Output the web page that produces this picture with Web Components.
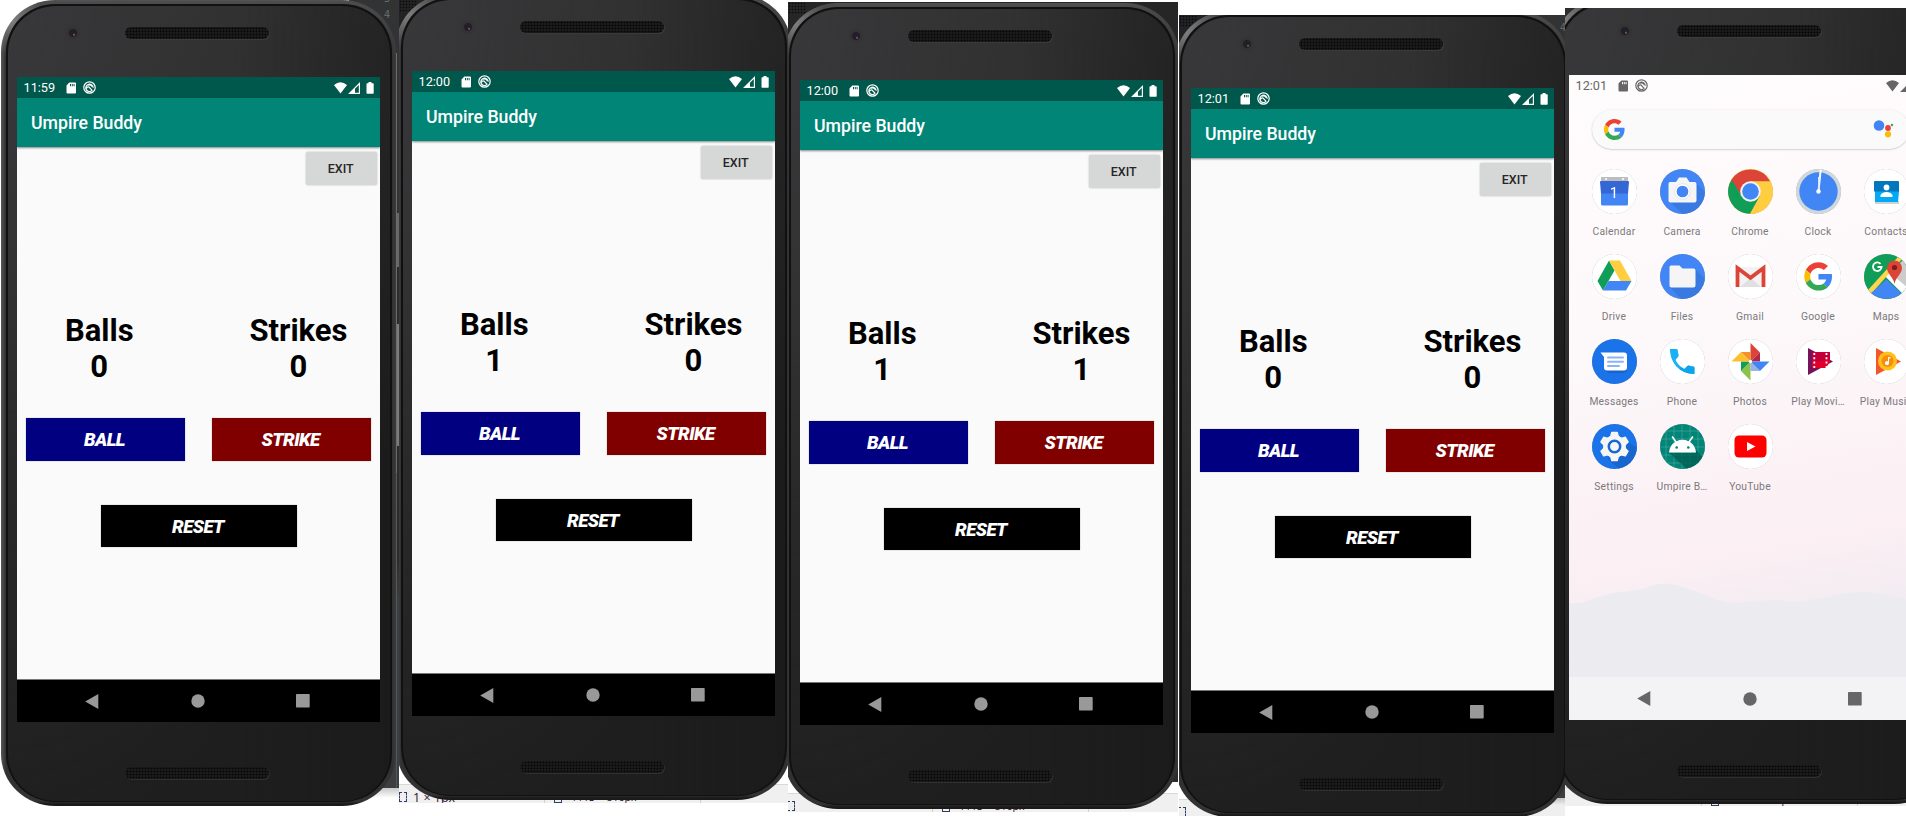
<!DOCTYPE html>
<html lang="en">
<head>
<meta charset="utf-8">
<title>Umpire Buddy</title>
<style>
  body { margin: 0; background: #fff; font-family: Roboto, "Liberation Sans", sans-serif; overflow: hidden; width: 1906px; height: 816px; }
  main { display: grid; grid-template-columns: 399px 389px 391px 386px 341px; height: 816px; overflow: hidden; }
</style>
</head>
<body>
<main>
  <capture-pane backdrop="editor" style="--x:1px;--y:0px;--w:399px;--h:816px;--ty:0px">
    <phone-frame><umpire-app time="11:59" balls="0" strikes="0"></umpire-app></phone-frame>
  </capture-pane>
  <capture-pane backdrop="mesh" style="--x:-3px;--y:-6px;--w:389px;--h:803px;--sx:0px" selection="1 × 1px" label="1113 × 816px">
    <phone-frame><umpire-app time="12:00" balls="1" strikes="0"></umpire-app></phone-frame>
  </capture-pane>
  <capture-pane backdrop="dark" style="--x:-4px;--y:1px;--w:390px;--h:810px;--ty:2px;--sx:-1px" label="1113 × 816px">
    <phone-frame><umpire-app time="12:00" balls="1" strikes="1"></umpire-app></phone-frame>
  </capture-pane>
  <capture-pane backdrop="editor-low" style="--x:-4px;--y:-4px;--w:386px;--h:801px;--ty:15px;--sx:-1px">
    <phone-frame><umpire-app time="12:01" balls="0" strikes="0"></umpire-app></phone-frame>
  </capture-pane>
  <capture-pane backdrop="launcher" style="--x:-12px;--y:-10px;--w:341px;--h:798px;--ty:8px;--sx:-9px" label="1500 × 816px">
    <phone-frame><app-launcher time="12:01"></app-launcher></phone-frame>
  </capture-pane>
</main>

<script>
const define = (name, render) => customElements.define(name, class extends HTMLElement {
  connectedCallback() {
    if (this.shadowRoot) return;
    this.attachShadow({ mode: 'open' }).innerHTML = render(this);
  }
});

/* Strip along the bottom of the image editor: selection size and canvas size. */
define('size-strip', el => `
<style>
  :host { display: flex; height: 18px; background: #f0f0f0; border-top: 1px solid #d8d8d8; margin-left: var(--sx, 0px); font: 12px/25px "Open Sans", Roboto, sans-serif; color: #301030; width: 500px; overflow: hidden; }
  div { box-sizing: border-box; display: flex; white-space: nowrap; border-right: 1px solid #d0d0d0; }
  .a { width: 146px; gap: 6px; font-size: 12.500px; } .b { width: 156px; padding-left: 9px; gap: 9px; font-size: 10.500px; }
  i { width: 6px; height: 8px; border: 1px dashed #2b3f66; margin-top: 7px; flex: none; }
  .b i { border-style: solid; height: 9px; }
</style>
<div class="a"><i></i>${el.getAttribute('selection') ? `<span>${el.getAttribute('selection')}</span>` : ''}</div>
${el.getAttribute('label') ? `<div class="b"><i></i><span>${el.getAttribute('label')}</span></div>` : ''}`);

/* One clipped capture with whatever window shows behind the phone. */
define('capture-pane', el => {
  const kind = el.getAttribute('backdrop');
  const strip = kind !== 'editor';
  return `
<style>
  :host { display: block; width: var(--w); height: var(--h); margin-top: var(--ty, 0px); overflow: hidden; position: relative; background: #fff; }
  .back { position: absolute; inset: 0; display: flex; flex-direction: column; justify-content: flex-end; }
  .editor { background: linear-gradient(180deg, #313335 0 215px, #2b2b2b 230px 560px, #3c3f41 600px 788px, #c8c8c8 788px, #fff 798px) right / 50px 100% no-repeat; }
  .editor-low { background: linear-gradient(180deg, #313335 0 300px, #3c3f41 400px 783px, #c4c4c4 783px, #efefef 790px) right / 60px 100% no-repeat, linear-gradient(#202223, #202223) 0 0 / 100% 30px no-repeat; }
  .editor-low size-strip { width: 70px; height: 16px; }
  .mesh { background: linear-gradient(#232323, #232323) 0 0 / 60px 60px no-repeat; }
  .dark { background: linear-gradient(#262626, #262626) 0 0 / 100% 200px no-repeat, linear-gradient(#2b2b2b, #2b2b2b) right 0 / 8px 780px no-repeat; }
  .launcher { background: linear-gradient(#2b2d2e, #2b2d2e) 0 0 / 60px 60px no-repeat; }
  .holes { position: absolute; top: 0; left: 0; width: 18px; height: 12px; background: radial-gradient(circle, #0a0a0a 0.7px, #0000 1.1px) 0 0 / 3px 3px; }
  .nums { position: absolute; right: 9px; top: -9px; font: 10px/16px "DejaVu Sans Mono", monospace; color: #686b6e; text-align: right; width: 10px; }
  .nums.low { right: -1px; top: 5px; }
  .side { position: absolute; right: 0; top: 53px; width: 3px; height: 735px; background: linear-gradient(#6c6c6c 0 420px, #55585a 420px) 0 0 / 1px 100% no-repeat, linear-gradient(#0000 160px, #66686a 160px 214px, #0000 214px 271px, #7b7b7b 271px 393px, #0000 393px) 1px 0 / 2px 100% no-repeat; }
  .clip { position: relative; margin-left: var(--x); transform: translateY(var(--y)); width: max-content; }
</style>
<div class="back ${kind}">${strip ? `<size-strip selection="${el.getAttribute('selection') || ''}" label="${el.getAttribute('label') || ''}"></size-strip>` : ''}</div>
${kind === 'mesh' || kind === 'dark' || kind === 'editor-low' ? '<div class="holes"></div>' : ''}
${kind === 'editor' ? '<div class="side"></div><div class="nums"><div>3</div><div>4</div></div>' : ''}
${kind === 'editor-low' ? '<div class="nums low">4</div>' : ''}
<div class="clip"><slot></slot></div>`;
});

define('phone-frame', () => `
<style>
  :host { display: block; width: 395px; height: 806px; }
  .rim { box-sizing: border-box; width: 395px; height: 806px; padding: 4px 4.500px 4px 5px; border-radius: 54px / 52px; background: radial-gradient(circle at 10px 20px, #a0a0a0aa 0, #0000 34px), linear-gradient(90deg, #77777788 0, #0000 5px 391px, #4448 395px), linear-gradient(180deg, #555 0, #4c4c4c 2px, #303030 60px, #303030 750px, #333 801px, #1c191b 804px); }
  .line { box-sizing: border-box; height: 798px; padding: 1.5px; border-radius: 49px / 48px; background: #111; }
  .face { box-sizing: border-box; height: 795px; border-radius: 48px / 47px; overflow: hidden; padding: 0 9.5px; display: flex; flex-direction: column; align-items: center;
    background: linear-gradient(90deg, #0000 60%, #17171766 100%), radial-gradient(ellipse at 0 0, #38383a, #0000 75%), linear-gradient(#2c2c2c 0, #272727 250px, #1e1e1e 450px, #1e1e1e); }
  .top { height: 71.5px; width: 363px; flex: none; display: grid; grid-template-columns: 108px 144px 1fr; align-items: start; }
  .cam { width: 14px; height: 14px; border-radius: 50%; margin: 20px 0 0 49px; background: radial-gradient(circle at 58% 62%, #7a4a58 0 .8px, #0000 1.4px), radial-gradient(circle, #211e28 0 3.6px, #343334 4.6px 7px); }
  .grille { width: 144px; height: 12px; margin-top: 21.3px; border-radius: 6px; background: radial-gradient(circle, #060606 .7px, #0000 1.2px) 1px 0 / 3px 3px, #1b1b1b; box-shadow: 1px 1px 0 #3a3a3a; }
  .scr { width: 363px; height: 645px; overflow: hidden; flex: none; align-self: flex-start; }
  .low { margin: 44.5px 3px 0 0; box-shadow: 1px 1px 0 #303030; }
</style>
<div class="rim"><div class="line"><div class="face">
  <div class="top"><div class="cam"></div><div class="grille"></div></div>
  <div class="scr"><slot></slot></div>
  <div class="grille low"></div>
</div></div></div>`);

define('status-bar', el => `
<style>
  :host { display: flex; align-items: center; height: 21px; box-sizing: border-box; padding: 0 6px 0 6.500px; font: 12.7px/21px Roboto, sans-serif; color: #fff; }
  .t { width: 41px; } svg { display: block; fill: currentColor; }
</style>
<span class="t">${el.getAttribute('time')}</span>
<svg width="12" height="12" viewBox="0 0 12 12"><path fill-rule="evenodd" d="M4.3.5H10q1 0 1 1v9q0 1-1 1H2.500q-1 0-1-1V3.400zM5 2v2.200h1V2zm1.800 0v2.200h1V2zm1.800 0v2.200h1V2z"/></svg>
<svg width="13" height="13" viewBox="0 0 13 13" style="margin-left:6.500px"><g fill="none" stroke="currentColor" stroke-width="1.200"><circle cx="6.500" cy="6.500" r="5.700"/><path d="M9 9.600A3.700 3.700 0 1 1 10.200 6.800M3.300 7.600Q4.200 5.600 6 6L9.400 9.700M5 4.200Q7.500 3 9.200 5.600"/></g></svg>
<svg width="13" height="12" viewBox="0 0 13 12" style="margin-left:auto"><path d="M0 3Q6.500-2.600 13 3L6.500 11.500z"/></svg>
<svg width="12" height="12" viewBox="0 0 12 12" style="margin-left:1px"><path fill-rule="evenodd" d="M12 0v12H0zM10.800 2.900 7 6.700v4.100h3.800z"/></svg>
<svg width="8" height="12" viewBox="0 0 8 12" style="margin-left:6px"><path d="M2.500 0h3v1.200H7q.7 0 .7.700v9q0 .8-.7.800H1.200q-.7 0-.7-.8v-9q0-.7.7-.7h1.300z"/></svg>`);

define('nav-bar', () => `
<style>
  :host { display: flex; height: 43px; align-items: center; box-sizing: border-box; padding: 0 70px 0 68px; justify-content: space-between; }
  svg { display: block; fill: currentColor; }
</style>
<svg width="15" height="15" viewBox="0 0 15 15"><path d="M.200 7.500 13.300 0v15z"/></svg>
<svg width="14" height="14" viewBox="0 0 14 14"><circle cx="7" cy="7" r="6.700"/></svg>
<svg width="14" height="14" viewBox="0 0 14 14"><rect width="13.700" height="13.500" rx=".7"/></svg>`);

define('score-column', el => `
<style>
  :host { display: block; text-align: center; font: bold 31px/36px Roboto, sans-serif; color: #000; }
</style>
<div><slot></slot></div><div>${el.getAttribute('count')}</div>`);

define('call-button', () => `
<style>
  :host { display: block; box-sizing: border-box; height: 42.500px; text-align: center; font: italic 900 18.500px/45px Roboto, sans-serif; letter-spacing: -.55px; color: #fff; text-indent: -2px; background: var(--c); box-shadow: 0 0 1px #0006; }
</style><slot></slot>`);

define('umpire-app', el => `
<style>
  :host { display: flex; flex-direction: column; height: 645px; background: #fafafa; }
  status-bar { background: #00574b; flex: none; }
  header { height: 49px; flex: none; background: #008577; color: #fff; font: 500 17.700px/50px Roboto, sans-serif; padding-left: 14px; box-shadow: 0 1px 2px #0007; }
  section { flex: 1; display: flex; flex-direction: column; }
  .exit { align-self: flex-end; margin: 5px 3px 0 0; width: 71.500px; height: 32.500px; background: #d6d7d7; border-radius: 2px; text-align: center; font: 500 12.500px/33px Roboto, sans-serif; color: #262626; text-indent: -1px; box-shadow: 0 0 2px #0004; }
  .score { display: grid; grid-template-columns: 164.500px 163px; gap: 35.500px; margin-top: 128.500px; justify-content: start; }
  .row { display: grid; grid-template-columns: 159px 159px; gap: 27px; margin: 33px 0 0 9px; }
  .reset { width: 196px; margin: 44px 0 0 84px; }
  nav-bar { background: #000; color: #999; border-top: 1px solid #777; flex: none; }
</style>
<status-bar time="${el.getAttribute('time')}"></status-bar>
<header>Umpire Buddy</header>
<section>
  <div class="exit">EXIT</div>
  <div class="score"><score-column count="${el.getAttribute('balls')}">Balls</score-column><score-column count="${el.getAttribute('strikes')}">Strikes</score-column></div>
  <div class="row"><call-button style="--c:#000080">BALL</call-button><call-button style="--c:#800000">STRIKE</call-button></div>
  <call-button class="reset" style="--c:#000">RESET</call-button>
</section>
<nav-bar></nav-bar>`);

const G = `<path fill="#ea4335" d="M24 9.500c3.500 0 6.700 1.200 9.200 3.600l6.900-6.900C35.900 2.400 30.500 0 24 0 14.600 0 6.500 5.400 2.600 13.200l8 6.200C12.400 13.700 17.700 9.500 24 9.500z"/><path fill="#4285f4" d="M47 24.600c0-1.600-.2-3.100-.4-4.600H24v9h12.900c-.6 3-2.300 5.500-4.800 7.200l7.700 6C44.400 38 47 31.800 47 24.600z"/><path fill="#fbbc05" d="M10.500 28.600a14.500 14.500 0 0 1 0-9.200l-8-6.200a24 24 0 0 0 0 21.600z"/><path fill="#34a853" d="M24 48c6.500 0 11.900-2.100 15.900-5.800l-7.700-6c-2.200 1.500-4.900 2.300-8.200 2.300-6.300 0-11.600-4.200-13.500-9.900l-8 6.200C6.500 42.600 14.600 48 24 48z"/>`;

/* Launcher artwork on a 45-unit disc. */
const ART = {
  Calendar: ['#fff', `<path d="M9 8h27v8H9z" fill="#bdbdbd"/><circle cx="14" cy="10" r="1" fill="#fff"/><circle cx="31" cy="10" r="1" fill="#fff"/><path fill="#4285f4" d="M9 24h27v11q0 1.500-1.500 1.500h-24Q9 36.500 9 35z"/><path fill="#3367d6" d="M8 13q0-1 1-1h27q1 0 1 1l-1 11.500H9z"/>`, '1'],
  Camera: ['#4285f4', `<path fill="#2f6fd0" opacity=".5" d="M36 14 45 23q0 20-22 22L10 33z"/><path fill="#f5f5f5" d="M10 13h6l3-4.500h7.500L29.500 13H34.500q2 0 2 2v16.500q0 2-2 2h-24q-2 0-2-2V15q0-2 1.500-2z"/><circle cx="22.500" cy="22.500" r="6.600" fill="#4285f4" stroke="#fff" stroke-width="1.500"/><circle cx="22.500" cy="22.500" r="7.800" fill="none" stroke="#e0e4ea" stroke-width=".8"/>`],
  Chrome: ['#ffcd40', `<path fill="#0f9d58" d="M22 45 32 27 20 32 12 26 3.500 10.500A22.500 22.500 0 0 0 22 45z"/><path fill="#ffcd40" d="M42 12.200A22.500 22.500 0 0 1 22 45L32 27V12.200z"/><path fill="#db4437" d="M3 11.500A22.500 22.500 0 0 1 42 12.200H22.500L13 26z"/><path fill="#0f9d58" d="M3.500 10.500 13 26l-4 2z"/><circle cx="22.500" cy="22.500" r="10.300" fill="#f1f1f1"/><circle cx="22.500" cy="22.500" r="8.300" fill="#4285f4"/>`],
  Clock: ['#cfd8dc', `<circle cx="22.500" cy="22.500" r="19.200" fill="#4285f4"/><path d="M22.500 22.500 24.700.5" stroke="#fff" stroke-width="2"/><path d="M23 22 22.700 8" stroke="#dce6f5" stroke-width="1.500"/><circle cx="22.500" cy="22.500" r="2.200" fill="#fff"/>`],
  Contacts: ['#fff', `<path fill="#cfd2d4" d="M11 32h24v3H11z"/><path fill="#03a9f4" d="M11 22h24l-1 11H11z"/><path fill="#0277bd" d="M10 13q0-1 1-1h23q1 0 1 1v9.500H10z"/><circle cx="22.500" cy="18.500" r="2.900" fill="#fff"/><path fill="#fff" d="M16.500 28v-2q2-3 6-3t6 3v2z"/>`],
  Drive: ['#fff', `<path fill="#0f9d58" d="M17 6.500 22.500 16.500 11 36.500 5.500 27z"/><path fill="#ffcd40" d="M17 6.500h11L39.500 27H28.500z"/><path fill="#4285f4" d="M16.500 27h23L34 36.500H11z"/>`],
  Files: ['#4285f4', `<path fill="#2f6fd0" opacity=".5" d="M36 16 45 25q0 20-24 20L10 33z"/><path fill="#f5f5f5" d="M11 11.500h8.500l3 3h11q2 0 2 2V31.500q0 2-2 2H11.500q-2 0-2-2V13q0-1.500 1.500-1.500z"/>`],
  Gmail: ['#fff', `<path fill="#f2f2f2" d="M9 13h27v20H9z"/><path fill="#e0e0e0" d="m12 33 10.500-9L33 33z"/><path fill="none" stroke="#db4437" stroke-width="3.800" d="M9.500 33V14l13 9.800L35.500 14v19"/>`],
  Google: ['#fff', `<g transform="translate(8.300 8.300) scale(.59)">${G}</g>`],
  Maps: ['#0f9d58', `<path fill="#ccc" d="M22 23 40 5q5 8 5 18t-7 16z"/><path fill="#fff" d="m21 22 4-4L44 34l-5 6z"/><path fill="#ffd54f" d="M38 5 7 40l-3-4L34 3z"/><path fill="#4285f4" d="M22.500 25.500 39 41q-16 8-33-1z"/><path fill="#db4437" d="M30.500 30c-1-7-7.500-10-7.500-16a7.500 7.500 0 0 1 15 0c0 6-6.500 9-7.500 16z"/><circle cx="30.500" cy="13.500" r="2.600" fill="#7b1f17"/><path fill="none" stroke="#fff" stroke-width="1.800" d="M16.500 9.800A4.300 4.300 0 1 0 17.600 13H13.500"/>`],
  Messages: ['#1a73e8', `<path fill="#1558b8" opacity=".6" d="M35 16v14q0 4-4 4H16l-3-3z"/><path fill="#fff" d="M8.500 13.500H32q3 0 3 3V28.500q0 3-3 3H15q-3 0-3-3V18z"/><path stroke="#8ab4f8" stroke-width="2" stroke-linecap="round" d="M16 18.500h15M16 22.800h15M16 27h11"/>`],
  Phone: ['#fff', `<path fill="#19b1f5" d="M10 10h6.500q1 0 1.200 1 .3 3 1 5 .2 1-.5 1.700L15.500 21q3 6 8.800 9l3-3q.8-.7 1.700-.4 2.500.8 4.500 1 1 .2 1 1.200V35C19 35 10 23 10 10z"/><path fill="#039be5" opacity=".6" d="m21 28 3.300 2 3-3q.8-.7 1.700-.4 2.500.8 4.500 1 1 .2 1 1.200V35q-9 0-15-5z"/>`],
  Photos: ['#fff', `<path fill="#db4437" d="M22.500 4 32 13.500 22.500 22.500z"/><path fill="#b3264a" d="M22.500 22.500 32 13.500v9z"/><path fill="#4285f4" d="M22.500 22.500H41.500L32 32z"/><path fill="#3367d6" d="M22.500 22.500 32 32H22.500z" opacity=".5"/><path fill="#8bc34a" d="M22.500 22.500V41.500L13 32z"/><path fill="#0f9d58" d="M22.500 22.500 13 32v-9.500z"/><path fill="#fbc02d" d="M22.500 22.500H3.500L13 13z"/><path fill="#f4902c" d="M22.500 22.500 13 13h9.500z"/><circle cx="22.500" cy="22.500" r="1.700" fill="#fff"/>`],
  'Play Movi…': ['#fff', `<path fill="#77135a" d="M12 9 37 22.500 12 36z"/><path fill="#e3002b" d="M16 13h18v9.500L30 29H16z"/><path fill="#c2003b" d="M16 13h18q-1 4 0 7l-18 4z"/><path stroke="#fff" stroke-width="1.800" stroke-dasharray="2 2.300" d="M18.300 14v15M30.500 14v15"/>`],
  'Play Music': ['#fff', `<path fill="#f4572c" d="M12 9 37 22.500 12 36z"/><circle cx="23.500" cy="22" r="9.500" fill="#ffc11a"/><circle cx="23.500" cy="22" r="6" fill="#f78c0e"/><path fill="#fff" d="M24 18h2.500v1.500H25V24a2 2 0 1 1-1-1.600z"/>`],
  Settings: ['#1a73e8', `<path fill="#1558b8" opacity=".5" d="M36 18 45 24q-1 18-18 21L16 35z"/><g fill="#f5f5f5" stroke="#f5f5f5" stroke-linejoin="round"><circle cx="22.500" cy="22.500" r="11"/><path stroke-width="1.500" d="m19.800 8.500h5.400l1 4h-7.400zM19.800 36.500h5.400l1-4h-7.400zM33.300 13.300l2.700 4.600-3 3-3.600-6.500zM9 27.200l2.700 4.600 4-1.100-3.700-6.500zM36 27.200l-2.700 4.600-4-1.100 3.700-6.500zM11.700 13.300 9 17.900l3 3 3.600-6.500z"/></g><circle cx="22.500" cy="22.500" r="5.700" fill="#f5f5f5" stroke="#1a67d2" stroke-width="2.500"/>`],
  'Umpire B…': ['#008577', `<path stroke="#5fb3aa" stroke-width=".5" d="M6 0v45M14 0v45M22 0v45M30 0v45M38 0v45M0 7h45M0 15h45M0 23h45M0 31h45M0 39h45"/><path fill="#00594f" opacity=".7" d="M9 29h27v-3l9 9q-6 9-18 10z"/><path fill="#fff" d="M9 28.500q.5-7 6-10.500L11.500 13l1.300-1 3.700 5.200q6-2.700 12 0L32.200 12l1.300 1L30 18q5.500 3.500 6 10.500z"/><circle cx="16.700" cy="23.500" r="1.300" fill="#008577"/><circle cx="28.300" cy="23.500" r="1.300" fill="#008577"/>`],
  YouTube: ['#fff', `<rect x="6.500" y="11.500" width="32" height="22" rx="4.500" fill="#f00"/><path fill="#fff" d="m19 18 8.500 4.500L19 27z"/>`]
};

define('app-icon', el => {
  const [bg, art, text] = ART[el.textContent];
  return `
<style>
  :host { display: flex; flex-direction: column; align-items: center; width: 68px; height: 85px; }
  .disc { position: relative; width: 45px; height: 45px; border-radius: 50%; filter: drop-shadow(0 .8px .6px #0005); }
  svg { display: block; }
  .txt { position: absolute; inset: 0; text-align: center; font: 15px/49px Roboto, sans-serif; color: #fff; }
  .name { margin-top: 9px; font: 10.300px/17px Roboto, sans-serif; letter-spacing: .25px; color: #7b797c; white-space: nowrap; }
</style>
<div class="disc"><svg width="45" height="45" viewBox="0 0 45 45"><clipPath id="c"><circle cx="22.500" cy="22.500" r="22.500"/></clipPath><g clip-path="url(#c)"><rect width="45" height="45" fill="${bg}"/>${art}</g></svg>${text ? `<div class="txt">${text}</div>` : ''}</div>
<div class="name"><slot></slot></div>`;
});

define('app-launcher', el => `
<style>
  :host { display: flex; flex-direction: column; height: 645px; position: relative; background: linear-gradient(170deg, #fffcfd 0, #fdf8fa 40%, #fbeff3 72%, #f0ebf1 84%); }
  .hills { position: absolute; left: 0; top: 500px; display: block; }
  status-bar { color: #666; position: relative; flex: none; }
  .search { position: relative; flex: none; box-sizing: border-box; margin: 14px 23px 0; height: 38.500px; border-radius: 20px; background: #fafafa; box-shadow: 0 .5px 1.500px #0004; display: flex; align-items: center; justify-content: space-between; padding: 0 14px 0 12px; }
  .apps { position: relative; display: grid; grid-template-columns: repeat(5, 68px); margin: 20px 0 0 11px; flex: 1; align-content: start; }
  nav-bar { position: relative; background: #f3f2f5; color: #666; }
</style>
<svg class="hills" width="363" height="110" viewBox="0 0 363 110"><path fill="#ecebf0" d="M0 28Q12 29 18 26T44 18Q60 16 74 14 90 7 104 9.500 118 12 151 26 160 28.500 171 28 195 25 211 25 222 28 231 27L280 18Q298 15 318 20 330 24 363 27V110H0z"/></svg>
<status-bar time="${el.getAttribute('time')}"></status-bar>
<div class="search">
  <svg width="21" height="21" viewBox="0 0 48 48">${G}</svg>
  <svg width="22" height="22" viewBox="0 0 22 22"><circle cx="6" cy="7.500" r="5.300" fill="#4285f4"/><circle cx="15" cy="10" r="2.900" fill="#ea4335"/><circle cx="15" cy="16.300" r="3.100" fill="#fbbc05"/><circle cx="19" cy="7" r="1.200" fill="#34a853"/></svg>
</div>
<div class="apps">${Object.keys(ART).map(n => `<app-icon>${n}</app-icon>`).join('')}</div>
<nav-bar></nav-bar>`);
</script>
</body>
</html>
